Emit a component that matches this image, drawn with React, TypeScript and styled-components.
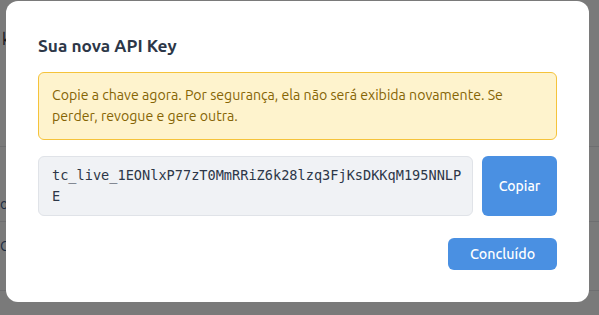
import React from "react";
import styled, { createGlobalStyle } from "styled-components";

const GlobalStyle = createGlobalStyle`
  html, body { margin: 0; padding: 0; }
  body {
    font-family: Ubuntu, "Open Sans", "Noto Sans", sans-serif;
    background: #ffffff;
    width: 599px;
    height: 315px;
    overflow: hidden;
  }
`;

const Page = styled.div`
  width: 599px;
  height: 315px;
  background: #ffffff;
  display: flex;
  flex-direction: column;
`;

const PageHeader = styled.div`
  height: 146px;
  padding: 30px 0 0 2px;
  box-sizing: border-box;
  font-size: 16px;
  color: #1f2937;
`;

const PageRow = styled.div<{ $h: number; $top: number }>`
  height: ${(p) => p.$h}px;
  border-top: 1px solid #e5e7eb;
  box-sizing: border-box;
  padding-top: ${(p) => p.$top}px;
  font-size: 14px;
  line-height: 18px;
  color: #3b5b8c;
`;

const Overlay = styled.div`
  position: fixed;
  inset: 0;
  background: rgba(0, 0, 0, 0.52);
  display: flex;
  align-items: flex-start;
  justify-content: flex-start;
  padding: 1px 0 0 6px;
`;

const Modal = styled.div`
  width: 583px;
  box-sizing: border-box;
  background: #ffffff;
  border-radius: 12px;
  padding: 32px;
  display: flex;
  flex-direction: column;
`;

const Title = styled.h2`
  margin: 0 0 14px;
  font-size: 17.3px;
  line-height: 25px;
  font-weight: 700;
  color: #2d3748;
`;

const Alert = styled.div`
  background: #fef3cd;
  border: 1px solid #f5c33b;
  border-radius: 6px;
  padding: 12px 13px;
  font-size: 14.15px;
  line-height: 21px;
  color: #856404;
`;

const KeyRow = styled.div`
  display: flex;
  gap: 9px;
  margin-top: 16px;
`;

const KeyBox = styled.div`
  flex: 1;
  background: #f0f2f5;
  border: 1px solid #e0e3e8;
  border-radius: 6px;
  padding: 8px 10px 8px 13px;
  font-family: "DejaVu Sans Mono", monospace;
  font-size: 13.6px;
  line-height: 21px;
  color: #2d3748;
  word-break: break-all;
`;

const Button = styled.button`
  border: none;
  border-radius: 6px;
  background: #4a90e2;
  color: #ffffff;
  font-family: inherit;
  font-size: 14px;
  font-weight: 500;
  cursor: pointer;
  padding: 0;
`;

const CopyButton = styled(Button)`
  width: 75px;
`;

const Footer = styled.div`
  display: flex;
  justify-content: flex-end;
  margin-top: 22px;
`;

const DoneButton = styled(Button)`
  width: 109px;
  height: 32px;
  font-size: 14.3px;
`;

export default function App() {
  return (
    <>
      <GlobalStyle />
      <Page>
        <PageHeader>k</PageHeader>
        <PageRow $h={75} $top={48}>o</PageRow>
        <PageRow $h={69} $top={15}>C</PageRow>
        <PageRow $h={25} $top={0} />
      </Page>
      <Overlay>
        <Modal role="dialog" aria-labelledby="apikey-title">
          <Title id="apikey-title">Sua nova API Key</Title>
          <Alert>
            Copie a chave agora. Por segurança, ela não será exibida novamente. Se
            perder, revogue e gere outra.
          </Alert>
          <KeyRow>
            <KeyBox>tc_live_1EONlxP77zT0MmRRiZ6k28lzq3FjKsDKKqM195NNLPE</KeyBox>
            <CopyButton>Copiar</CopyButton>
          </KeyRow>
          <Footer>
            <DoneButton>Concluído</DoneButton>
          </Footer>
        </Modal>
      </Overlay>
    </>
  );
}
